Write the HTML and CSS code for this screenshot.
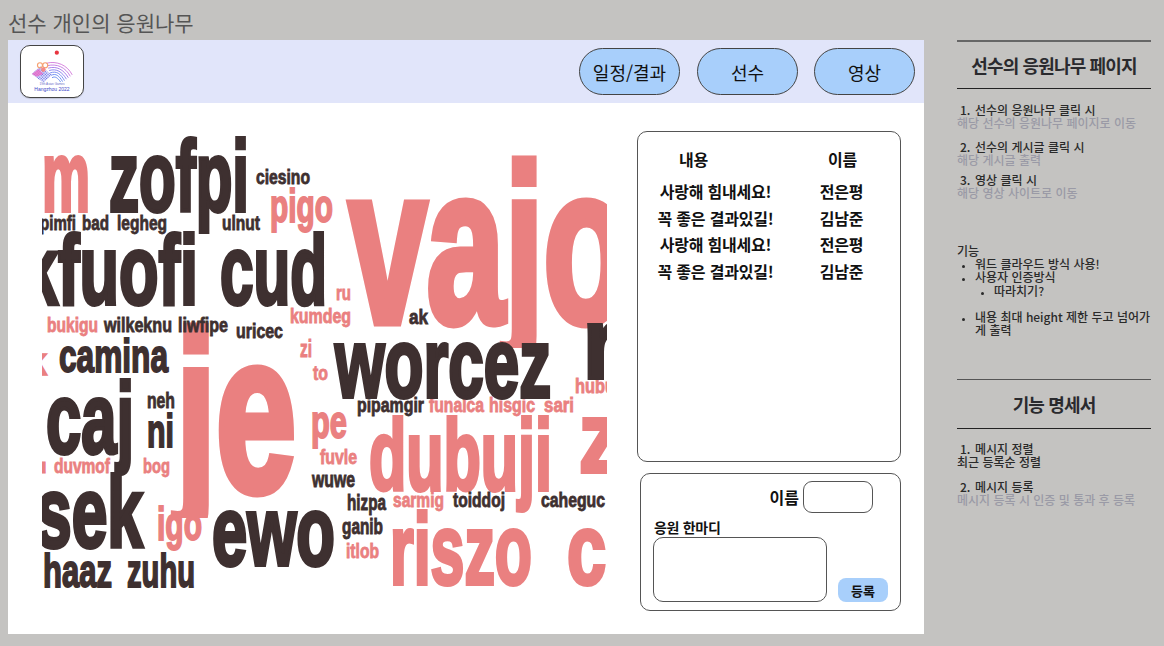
FILE: index.html
```html
<!DOCTYPE html>
<html lang="ko">
<head>
<meta charset="utf-8">
<title>선수 개인의 응원나무</title>
<link rel="stylesheet" href="styles.css">
</head>
<body>
<div class="page">
  <div class="main-col">
    <h1 class="page-title">선수 개인의 응원나무</h1>
    <div class="panel">
      <header class="topbar">
        <div class="logo">
          <svg viewBox="0 0 64 53" width="62" height="51">
            <defs>
              <pattern id="mesh" width="2" height="2" patternUnits="userSpaceOnUse" patternTransform="rotate(45)">
                <rect width="2" height="2" fill="#fff"/>
                <rect width="1.300" height="1.300" fill="#5a62e6"/>
              </pattern>
            </defs>
            <circle cx="37" cy="7" r="2.200" fill="#e8343f"/>
            <g class="logo-art">
              <g fill="none" stroke-width=".9">
                <path d="M25 16 C36 13 47 18 52 28" stroke="#d070d8"/>
                <path d="M26 18.500 C36 16 45 20 50 29.500" stroke="#c070e0"/>
                <path d="M27 21 C36 18.500 43 22.500 48 31" stroke="#a070e8"/>
                <path d="M28 23.500 C36 21 41.500 25 46 32.500" stroke="#8078ec"/>
                <path d="M29 26 C36 23.500 40 27 44 34" stroke="#6a80f0"/>
                <path d="M30 28.500 C35 26 38.500 29 42 35" stroke="#5c84f0"/>
                <path d="M31 31 C34 29 37 31 40 35.500" stroke="#5c84f0"/>
              </g>
              <path d="M10 27 L19 19 L31 28 L22 36 Z" fill="url(#mesh)"/>
              <path d="M10 27 L17 22 L22 27 L15 30 Z" fill="#e86cc8" opacity=".8"/>
              <circle cx="18.500" cy="18" r="2.600" fill="none" stroke="#f6a070" stroke-width="1.200"/>
              <circle cx="24" cy="18" r="2.600" fill="none" stroke="#f6a070" stroke-width="1.200"/>
              <circle cx="22" cy="22.500" r="2.400" fill="#f48a8a"/>
            </g>
            <text class="logo-small" x="32" y="41">19th Asian Games</text>
            <text class="logo-big" x="32" y="46.500">Hangzhou 2022</text>
          </svg>
        </div>
        <nav class="nav">
          <button class="nav-btn">일정/결과</button>
          <button class="nav-btn">선수</button>
          <button class="nav-btn">영상</button>
        </nav>
      </header>
      <div class="content">
        <svg class="cloud" viewBox="42 131 565 480" width="565" height="480">
          <defs>
            <clipPath id="clip-je"><rect x="42" y="131" width="565" height="387"/></clipPath>
            <clipPath id="clip-vajo"><rect x="42" y="131" width="565" height="217"/></clipPath>
          </defs>
          <g class="pink">
            <text x="42" y="211" font-size="100" textLength="48" lengthAdjust="spacingAndGlyphs">m</text>
            <text x="270" y="222" font-size="47" textLength="63" lengthAdjust="spacingAndGlyphs">pigo</text>
            <text x="47" y="332" font-size="20" textLength="51" lengthAdjust="spacingAndGlyphs">bukigu</text>
            <text x="290" y="323" font-size="20" textLength="61" lengthAdjust="spacingAndGlyphs">kumdeg</text>
            <text x="336" y="300" font-size="21" textLength="15" lengthAdjust="spacingAndGlyphs">ru</text>
            <text x="300" y="357" font-size="23" textLength="12" lengthAdjust="spacingAndGlyphs">zi</text>
            <text x="313" y="380" font-size="21" textLength="15" lengthAdjust="spacingAndGlyphs">to</text>
            <text x="26" y="375" font-size="38" textLength="21" lengthAdjust="spacingAndGlyphs">k</text>
            <text x="349" y="322" font-size="222" textLength="280" lengthAdjust="spacingAndGlyphs" clip-path="url(#clip-vajo)">vajo</text>
            <text x="176" y="491" font-size="226" textLength="120" lengthAdjust="spacingAndGlyphs" clip-path="url(#clip-je)">je</text>
            <text x="30" y="473" font-size="20" textLength="17" lengthAdjust="spacingAndGlyphs">u</text>
            <text x="54" y="473" font-size="20" textLength="56" lengthAdjust="spacingAndGlyphs">duvmof</text>
            <text x="143" y="473" font-size="20" textLength="27" lengthAdjust="spacingAndGlyphs">bog</text>
            <text x="157" y="540" font-size="47" textLength="45" lengthAdjust="spacingAndGlyphs">igo</text>
            <text x="311" y="438" font-size="47" textLength="36" lengthAdjust="spacingAndGlyphs">pe</text>
            <text x="320" y="464" font-size="20" textLength="37" lengthAdjust="spacingAndGlyphs">fuvle</text>
            <text x="346" y="558" font-size="21" textLength="33" lengthAdjust="spacingAndGlyphs">itlob</text>
            <text x="575" y="393" font-size="20" textLength="40" lengthAdjust="spacingAndGlyphs">hubu</text>
            <text x="429" y="412" font-size="20" textLength="55" lengthAdjust="spacingAndGlyphs">funalca</text>
            <text x="489" y="412" font-size="20" textLength="46" lengthAdjust="spacingAndGlyphs">hisgic</text>
            <text x="544" y="412" font-size="20" textLength="30" lengthAdjust="spacingAndGlyphs">sari</text>
            <text x="369" y="490" font-size="100" textLength="183" lengthAdjust="spacingAndGlyphs">dubuji</text>
            <text x="579" y="472" font-size="100" textLength="42" lengthAdjust="spacingAndGlyphs">z</text>
            <text x="393" y="507" font-size="20" textLength="51" lengthAdjust="spacingAndGlyphs">sarmig</text>
            <text x="390" y="584" font-size="100" textLength="142" lengthAdjust="spacingAndGlyphs">riszo</text>
            <text x="567" y="584" font-size="100" textLength="82" lengthAdjust="spacingAndGlyphs">co</text>
          </g>
          <g class="dark">
            <text x="109" y="211" font-size="100" textLength="140" lengthAdjust="spacingAndGlyphs">zofpi</text>
            <text x="256" y="184" font-size="21" textLength="54" lengthAdjust="spacingAndGlyphs">ciesino</text>
            <text x="40" y="230" font-size="20" textLength="36" lengthAdjust="spacingAndGlyphs">pimfi</text>
            <text x="82" y="230" font-size="20" textLength="27" lengthAdjust="spacingAndGlyphs">bad</text>
            <text x="117" y="230" font-size="20" textLength="50" lengthAdjust="spacingAndGlyphs">legheg</text>
            <text x="222" y="230" font-size="20" textLength="38" lengthAdjust="spacingAndGlyphs">ulnut</text>
            <text x="22" y="304" font-size="98" textLength="176" lengthAdjust="spacingAndGlyphs">kfuofi</text>
            <text x="220" y="304" font-size="98" textLength="107" lengthAdjust="spacingAndGlyphs">cud</text>
            <text x="104" y="332" font-size="20" textLength="68" lengthAdjust="spacingAndGlyphs">wilkeknu</text>
            <text x="178" y="332" font-size="20" textLength="50" lengthAdjust="spacingAndGlyphs">liwfipe</text>
            <text x="236" y="338" font-size="20" textLength="47" lengthAdjust="spacingAndGlyphs">uricec</text>
            <text x="409" y="324" font-size="21" textLength="19" lengthAdjust="spacingAndGlyphs">ak</text>
            <text x="59" y="372" font-size="47" textLength="109" lengthAdjust="spacingAndGlyphs">camina</text>
            <text x="46" y="453" font-size="100" textLength="88" lengthAdjust="spacingAndGlyphs">caj</text>
            <text x="147" y="408" font-size="22" textLength="28" lengthAdjust="spacingAndGlyphs">neh</text>
            <text x="147" y="447" font-size="47" textLength="27" lengthAdjust="spacingAndGlyphs">ni</text>
            <text x="36" y="547" font-size="100" textLength="107" lengthAdjust="spacingAndGlyphs">sek</text>
            <text x="212" y="565" font-size="98" textLength="123" lengthAdjust="spacingAndGlyphs">ewo</text>
            <text x="43" y="587" font-size="47" textLength="69" lengthAdjust="spacingAndGlyphs">haaz</text>
            <text x="127" y="587" font-size="47" textLength="68" lengthAdjust="spacingAndGlyphs">zuhu</text>
            <text x="335" y="397" font-size="98" textLength="216" lengthAdjust="spacingAndGlyphs">worcez</text>
            <text x="583" y="378" font-size="100" textLength="36" lengthAdjust="spacingAndGlyphs">r</text>
            <text x="357" y="412" font-size="20" textLength="67" lengthAdjust="spacingAndGlyphs">pipamgir</text>
            <text x="312" y="487" font-size="22" textLength="43" lengthAdjust="spacingAndGlyphs">wuwe</text>
            <text x="347" y="510" font-size="22" textLength="39" lengthAdjust="spacingAndGlyphs">hizpa</text>
            <text x="342" y="534" font-size="22" textLength="41" lengthAdjust="spacingAndGlyphs">ganib</text>
            <text x="453" y="507" font-size="20" textLength="52" lengthAdjust="spacingAndGlyphs">toiddoj</text>
            <text x="541" y="507" font-size="20" textLength="64" lengthAdjust="spacingAndGlyphs">caheguc</text>
          </g>
        </svg>
        <aside class="side-boxes">
          <section class="msg-box">
            <div class="msg-row msg-head"><span class="c-msg">내용</span><span class="c-name">이름</span></div>
            <div class="msg-row"><span class="c-msg">사랑해 힘내세요!</span><span class="c-name">전은평</span></div>
            <div class="msg-row"><span class="c-msg">꼭 좋은 결과있길!</span><span class="c-name">김남준</span></div>
            <div class="msg-row"><span class="c-msg">사랑해 힘내세요!</span><span class="c-name">전은평</span></div>
            <div class="msg-row"><span class="c-msg">꼭 좋은 결과있길!</span><span class="c-name">김남준</span></div>
          </section>
          <form class="form-box">
            <div class="name-row"><label class="name-label">이름</label><span class="name-input"></span></div>
            <div class="form-label">응원 한마디</div>
            <div class="msg-input-row"><span class="msg-input"></span><span class="submit">등록</span></div>
          </form>
        </aside>
      </div>
    </div>
  </div>
  <aside class="spec">
    <h2 class="spec-title">선수의 응원나무 페이지</h2>
    <div class="spec-item first"><div class="num"><span>1.</span>선수의 응원나무 클릭 시</div><div class="muted">해당 선수의 응원나무 페이지로 이동</div></div>
    <div class="spec-item gap-a"><div class="num"><span>2.</span>선수의 게시글 클릭 시</div><div class="muted">해당 게시글 출력</div></div>
    <div class="spec-item gap-b"><div class="num"><span>3.</span>영상 클릭 시</div><div class="muted">해당 영상 사이트로 이동</div></div>
    <div class="features">
      <div>기능</div>
      <ul class="bullets">
        <li>워드 클라우드 방식 사용!</li>
        <li>사용자 인증방식
          <ul class="bullets sub"><li>따라치기?</li></ul>
        </li>
        <li class="spaced">내용 최대 height 제한 두고 넘어가게 출력</li>
      </ul>
    </div>
    <h2 class="spec-title second">기능 명세서</h2>
    <div class="spec-item first"><div class="num"><span>1.</span>메시지 정렬</div><div>최근 등록순 정렬</div></div>
    <div class="spec-item gap-c"><div class="num"><span>2.</span>메시지 등록</div><div class="muted">메시지 등록 시 인증 및 통과 후 등록</div></div>
  </aside>
</div>
</body>
</html>
```

FILE: styles.css
```css
* { box-sizing: border-box; }
html, body { margin: 0; height: 100%; }
body {
  background: #c4c3c1;
  font-family: "Noto Sans CJK KR", "Noto Sans", sans-serif;
  overflow: hidden;
}
.page { display: flex; align-items: flex-start; padding-left: 8px; height: 646px; }
.main-col { width: 916px; flex: none; }
.page-title {
  margin: 0;
  height: 40px;
  padding-top: 7px;
  font-size: 21px;
  line-height: 30px;
  font-weight: 400;
  color: #555;
}
.panel { background: #fff; height: 594px; display: flex; flex-direction: column; }
.topbar {
  height: 63px;
  flex: none;
  background: #e1e5fa;
  display: flex;
  justify-content: space-between;
  align-items: flex-start;
  padding: 5px 9px 0 12px;
}
.logo {
  width: 64px;
  height: 53px;
  background: #fff;
  border: 1px solid #444;
  border-radius: 10px;
  display: flex;
  align-items: center;
  justify-content: center;
  box-shadow: 0 1px 1px rgba(0,0,0,.15);
}
.logo-art { transform: translate(1px, 2px); }
.logo-small { font: 3.2px "Liberation Sans", sans-serif; fill: #6a6ec8; text-anchor: middle; }
.logo-big { font: 5.2px "Liberation Sans", sans-serif; fill: #3c46c8; text-anchor: middle; }
.nav { display: flex; gap: 16px; padding-top: 3px; }
.nav-btn {
  width: 101px;
  height: 47px;
  border: 1px solid #444;
  border-radius: 24px;
  background: #a8cffb;
  color: #111;
  font: 400 18px/1 "Noto Sans CJK KR", sans-serif;
  padding: 0;
}
.nav-btn:first-child { margin-right: 1px; }
.content { flex: 1; display: flex; align-items: flex-start; padding: 28px 23px 0 34px; }
.cloud { display: block; flex: none; }
.cloud text { font-family: "Liberation Sans", sans-serif; font-weight: 700; stroke-width: .04em; }
.pink { fill: #ea8080; stroke: #ea8080; }
.dark { fill: #3e3030; stroke: #3e3030; }
.side-boxes { margin-left: 30px; flex: none; width: 264px; }
.msg-box {
  height: 331px;
  border: 1px solid #555;
  border-radius: 10px;
  padding: 13px 0 0;
}
.msg-row {
  display: flex;
  height: 26.5px;
  align-items: center;
  font-size: 16px;
  font-weight: 700;
  color: #111;
  letter-spacing: -.2px;
}
.msg-head { height: 27px; margin-bottom: 6px; }
.c-msg { width: 155px; text-align: center; flex: none; }
.c-name { width: 97px; text-align: center; flex: none; }
.msg-head .c-msg { width: 111px; }
.msg-head .c-name { margin-left: 45px; }
.form-box {
  margin: 11px 0 0 3px;
  width: 261px;
  height: 138px;
  border: 1px solid #555;
  border-radius: 10px;
  padding: 7px 12px 0;
  display: block;
}
.name-row { display: flex; justify-content: flex-end; align-items: center; gap: 4px; padding-right: 15px; }
.name-label { font-size: 16px; font-weight: 700; color: #111; }
.name-input { width: 70px; height: 32px; border: 1px solid #555; border-radius: 9px; }
.form-label { font-size: 14px; font-weight: 700; line-height: 18px; margin: 5px 0 0 1px; color: #111; letter-spacing: -.3px; }
.msg-input-row { display: flex; align-items: flex-end; justify-content: space-between; margin-top: 1px; }
.msg-input { width: 174px; height: 65px; border: 1px solid #555; border-radius: 10px; }
.submit {
  width: 50px;
  height: 24px;
  background: #a8cffb;
  border-radius: 8px;
  font-size: 13px;
  font-weight: 700;
  text-align: center;
  line-height: 25px;
  color: #111;
}
.spec {
  margin-left: 33px;
  margin-top: 40px;
  width: 194px;
  flex: none;
  font-size: 12px;
  line-height: 13.300px;
  font-weight: 500;
  color: #2a2a2a;
}
.spec-title {
  margin: 0;
  border-top: 2px solid #666;
  border-bottom: 1px solid #222;
  height: 49px;
  font-size: 18px;
  line-height: 47px;
  font-weight: 700;
  text-align: center;
  color: #2a2a2e;
  letter-spacing: -.85px;
}
.spec-title.second { margin-top: 42px; height: 50px; line-height: 48px; border-top-width: 1px; border-top-color: #555; }
.spec-item.first { margin-top: 14px; }
.second + .spec-item.first { margin-top: 13px; }
.spec-item.gap-a { margin-top: 10px; }
.spec-item.gap-b { margin-top: 7px; }
.spec-item.gap-c { margin-top: 12px; }
.num { padding-left: 3px; }
.num span { display: inline-block; width: 15px; }
.muted { color: #9a9aa6; }
.features { margin-top: 44px; }
.bullets { margin: 0 -3px 0 0; padding: 0 0 0 18px; list-style: disc; }
.bullets li::marker { font-size: 9px; }
.bullets.sub { margin: 0; padding-left: 19px; }
.spaced { margin-top: 13px; }
```
